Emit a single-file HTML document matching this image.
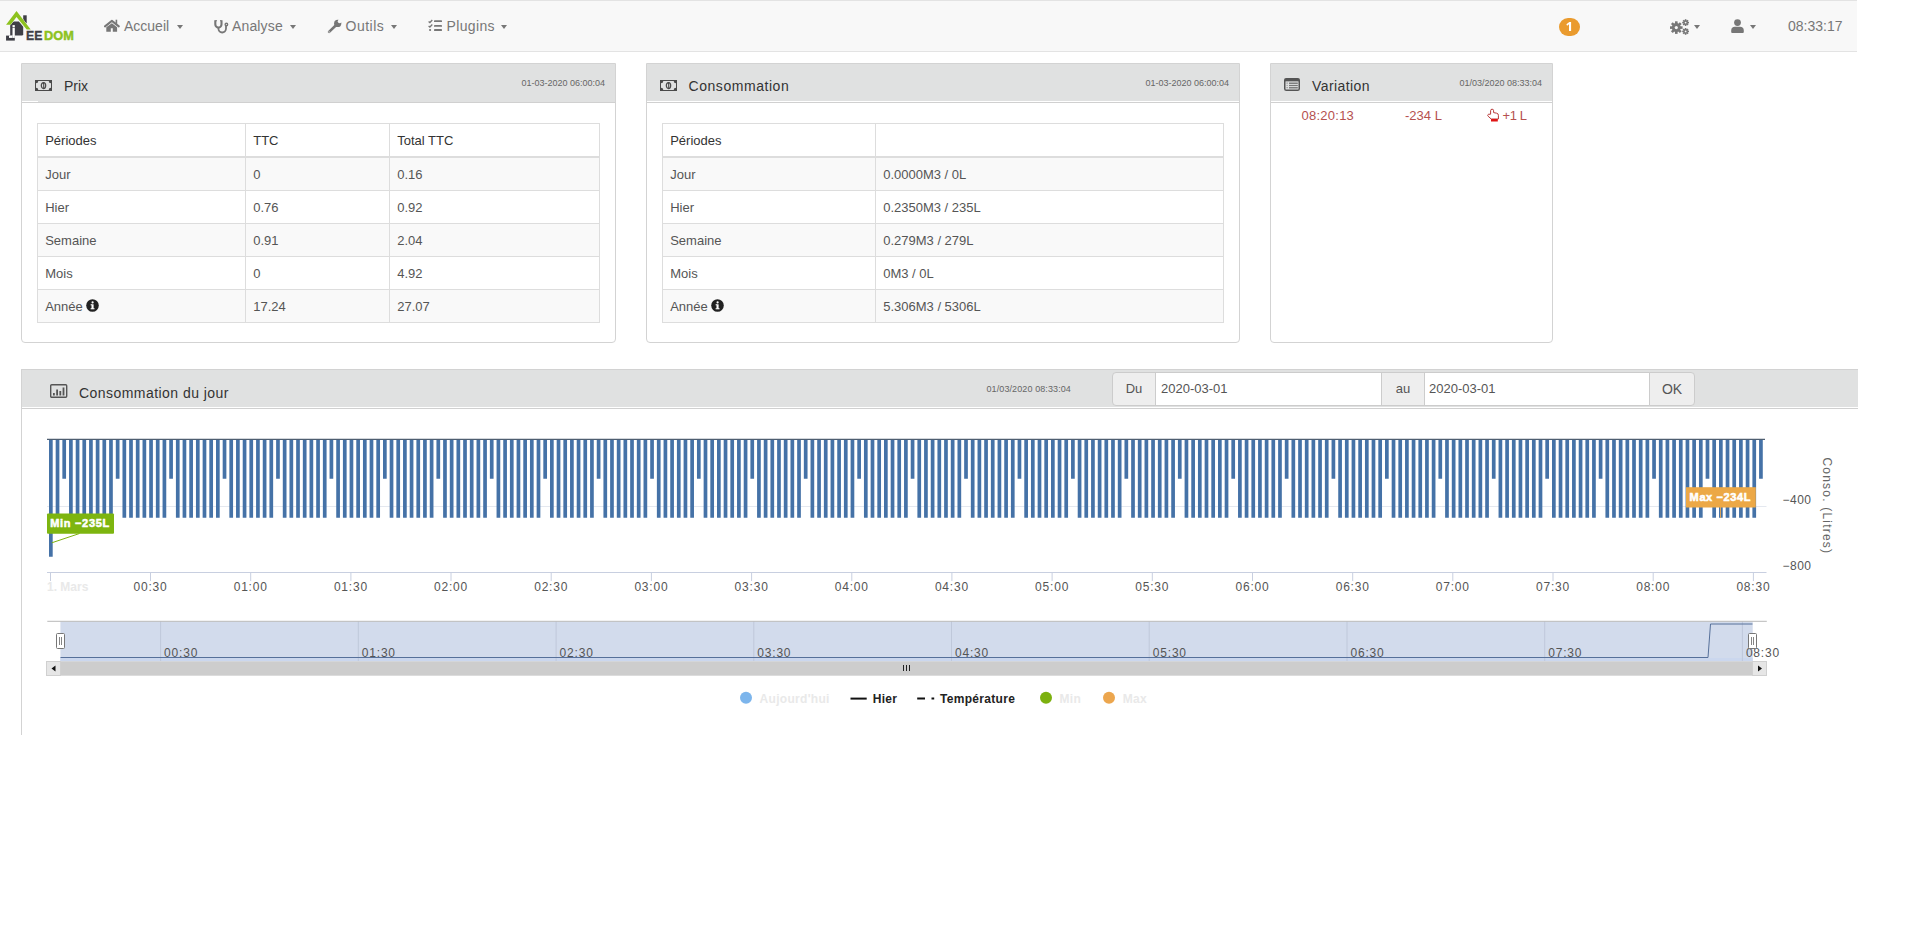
<!DOCTYPE html>
<html><head><meta charset="utf-8">
<style>
*{box-sizing:border-box}
html,body{margin:0;padding:0}
body{-webkit-font-smoothing:antialiased;width:1914px;height:935px;overflow:hidden;background:#fff;position:relative;font-family:"Liberation Sans",sans-serif;color:#555}
.abs{position:absolute}
#nav{position:absolute;left:0;top:0;width:1857px;height:52px;background:#f8f8f8;border-top:1px solid #e3e3e3;border-bottom:1px solid #e3e3e3}
.nt{position:absolute;top:16px;font-size:14px;line-height:18px;color:#777;white-space:nowrap}
.caret{position:absolute;width:0;height:0;border-left:3.6px solid transparent;border-right:3.6px solid transparent;border-top:4px solid #777}
.panel{position:absolute;border:1px solid #d3d3d3;border-radius:0 0 4px 4px;background:#fff}
.ph{position:absolute;left:0;top:0;right:0;height:39px;background:linear-gradient(#e0e1e1 0,#e0e1e1 37px,#fff 37px,#fff 38px,#d0d0d0 38px,#d0d0d0 39px)}
.pt{position:absolute;top:13px;font-size:14px;line-height:18px;color:#333;white-space:nowrap}
.pd{position:absolute;top:13px;font-size:9px;line-height:12px;color:#666;white-space:nowrap}
table.t{position:absolute;border-collapse:collapse;font-size:13px;color:#555}
table.t td{border:1px solid #ddd;padding:1.6px 0 0 7.2px;height:33px;line-height:18px;white-space:nowrap}
table.t tr.h td{color:#333;height:33px;border-bottom:2px solid #ddd}
table.t tr.s td{background:#f9f9f9}
table.t tr.f td{height:34px}
.var{position:absolute;top:108px;font-size:13px;line-height:16px;color:#b5514f;white-space:nowrap}
</style></head><body>

<div id="nav">
  <!-- logo -->
  <svg class="abs" style="left:0;top:-1px" width="80" height="50" viewBox="0 0 80 50">
    <path d="M10.2 35.6 V25 Q10.2 21.4 14 21.4 H18.9 L23.2 26.7 V34.2 Q23.2 35.6 21.8 35.6Z" fill="#3f3f46"/>
    <rect x="23.2" y="15.3" width="3.5" height="8" fill="#3f3f46"/>
    <rect x="6.06" y="35.6" width="8.74" height="5" fill="#3f3f46"/>
    <rect x="12.5" y="27.6" width="2.3" height="10.3" fill="#fff"/>
    <rect x="9" y="35.6" width="3.5" height="2.3" fill="#fff"/>
    <rect x="12.5" y="25.1" width="2.3" height="1.9" fill="#fff"/>
    <path d="M16.5 11.1 L30.7 29.5 H26.7 L16.5 17 L10.6 24.7 H6.06Z" fill="#8dc21f" stroke="#f8f8f8" stroke-width="0.9" paint-order="stroke"/>
    <text x="26.1" y="40.2" font-family="Liberation Sans" font-weight="700" font-size="13.7" fill="#3f3f46" stroke="#3f3f46" stroke-width="0.35" textLength="16.3" lengthAdjust="spacingAndGlyphs">EE</text>
    <text x="44" y="40.2" font-family="Liberation Sans" font-weight="700" font-size="13.7" fill="#8dc21f" stroke="#8dc21f" stroke-width="0.5" textLength="29.8" lengthAdjust="spacingAndGlyphs">DOM</text>
  </svg>
  <!-- Accueil -->
  <svg class="abs" style="left:104px;top:17px" width="16" height="14" viewBox="0 0 16 14">
    <path d="M1 8.4 L7.9 2.9 L14.8 8.4" fill="none" stroke="#777" stroke-width="2" stroke-linecap="round" stroke-linejoin="round"/>
    <rect x="11.6" y="1.7" width="1.6" height="4.2" fill="#777"/>
    <path d="M2.3 9.3 L7.9 5.2 L13.1 9.3 V13.7 H8.8 V10.2 H6.8 V13.7 H2.3Z" fill="#777"/>
  </svg>
  <span class="nt" style="left:124px">Accueil</span>
  <div class="caret" style="left:176.5px;top:24px"></div>
  <!-- Analyse -->
  <svg class="abs" style="left:213px;top:18px" width="16" height="15" viewBox="0 0 16 15">
    <path d="M2.3 1.2 V5.3 A3.1 3.3 0 0 0 8.5 5.3 V1.2" fill="none" stroke="#777" stroke-width="2.1"/>
    <path d="M2.3 1.7 H4 M8.5 1.7 H7" stroke="#777" stroke-width="1.1"/>
    <path d="M5.4 8.3 V9.6 A3.8 3.9 0 0 0 13 9.6 V6.6" fill="none" stroke="#777" stroke-width="1.8"/>
    <circle cx="13.4" cy="5.5" r="1.25" fill="none" stroke="#777" stroke-width="1.4"/>
  </svg>
  <span class="nt" style="left:232px;letter-spacing:0.15px">Analyse</span>
  <div class="caret" style="left:289.5px;top:24px"></div>
  <!-- Outils -->
  <svg class="abs" style="left:327px;top:17px" width="16" height="16" viewBox="0 0 16 16">
    <path d="M10 6.2 L2.1 13.9" stroke="#777" stroke-width="2.6" stroke-linecap="round"/>
    <circle cx="10.7" cy="5.4" r="3.6" fill="#777"/>
    <circle cx="12.7" cy="3.3" r="1.9" fill="#f8f8f8"/>
    <path d="M12.7 3.3 L15 1" stroke="#f8f8f8" stroke-width="2.2"/>
    <circle cx="2.1" cy="13.9" r="0.55" fill="#f8f8f8"/>
  </svg>
  <span class="nt" style="left:345.5px;letter-spacing:0.5px">Outils</span>
  <div class="caret" style="left:390.5px;top:24px"></div>
  <!-- Plugins -->
  <svg class="abs" style="left:428px;top:18.2px" width="15" height="13" viewBox="0 0 15 13">
    <rect x="6" y="1.3" width="8" height="1.8" rx="0.4" fill="#777"/>
    <rect x="6" y="6" width="8" height="1.8" rx="0.4" fill="#777"/>
    <rect x="6" y="10.1" width="8" height="1.8" rx="0.4" fill="#777"/>
    <path d="M0.6 2.4 L1.9 3.5 L4.3 1" fill="none" stroke="#777" stroke-width="1.3"/>
    <path d="M0.6 6.9 L1.9 8 L4.3 5.5" fill="none" stroke="#777" stroke-width="1.3"/>
    <circle cx="2.1" cy="11" r="1.1" fill="#777"/>
  </svg>
  <span class="nt" style="left:446.5px;letter-spacing:0.35px">Plugins</span>
  <div class="caret" style="left:501px;top:24px"></div>

  <!-- badge -->
  <svg class="abs" style="left:1559px;top:17px" width="21" height="18" viewBox="0 0 21 18">
    <rect x="0" y="0" width="21" height="18" rx="9" fill="#ea9b2e"/>
    <path d="M10 13 V6.3 L8.1 7.7 L7.4 6.2 L10.3 4.1 H12.1 V13Z" fill="#fff"/>
  </svg>
  <!-- gears -->
  <svg class="abs" style="left:1669.5px;top:17.5px" width="20" height="16" viewBox="0 0 20 16">
    <g fill="#777">
      <g transform="translate(6.3 8.6)">
        <circle r="4.5"/>
        <rect x="-1.3" y="-6.3" width="2.6" height="12.6"/>
        <rect x="-6.3" y="-1.3" width="12.6" height="2.6"/>
        <rect x="-1.3" y="-6.3" width="2.6" height="12.6" transform="rotate(45)"/>
        <rect x="-6.3" y="-1.3" width="12.6" height="2.6" transform="rotate(45)"/>
      </g>
      <g transform="translate(15.6 3.6)">
        <circle r="2.3"/>
        <rect x="-0.8" y="-3.4" width="1.6" height="6.8"/>
        <rect x="-3.4" y="-0.8" width="6.8" height="1.6"/>
        <rect x="-0.8" y="-3.4" width="1.6" height="6.8" transform="rotate(45)"/>
        <rect x="-3.4" y="-0.8" width="6.8" height="1.6" transform="rotate(45)"/>
      </g>
      <g transform="translate(15.6 12.4)">
        <circle r="2.3"/>
        <rect x="-0.8" y="-3.4" width="1.6" height="6.8"/>
        <rect x="-3.4" y="-0.8" width="6.8" height="1.6"/>
        <rect x="-0.8" y="-3.4" width="1.6" height="6.8" transform="rotate(45)"/>
        <rect x="-3.4" y="-0.8" width="6.8" height="1.6" transform="rotate(45)"/>
      </g>
    </g>
    <circle cx="6.3" cy="8.6" r="1.6" fill="#f8f8f8"/>
    <circle cx="15.6" cy="3.6" r="0.9" fill="#f8f8f8"/>
    <circle cx="15.6" cy="12.4" r="0.9" fill="#f8f8f8"/>
  </svg>
  <div class="caret" style="left:1693.5px;top:24px"></div>
  <!-- user -->
  <svg class="abs" style="left:1731px;top:18px" width="13" height="15" viewBox="0 0 13 15">
    <circle cx="6.5" cy="3.6" r="3.4" fill="#777"/>
    <path d="M0.2 13 V11.5 A3.8 3.8 0 0 1 4 7.8 H9 A3.8 3.8 0 0 1 12.8 11.5 V13 A1 1 0 0 1 11.8 14 H1.2 A1 1 0 0 1 0.2 13Z" fill="#777"/>
  </svg>
  <div class="caret" style="left:1749.5px;top:24px"></div>
  <span class="nt" style="left:1788px">08:33:17</span>
</div>

<!-- Panel Prix -->
<div class="panel" style="left:21px;top:63px;width:595px;height:280px">
  <div class="ph" style="background:linear-gradient(#e0e1e1 0,#e0e1e1 38px,#d0d0d0 38px,#d0d0d0 39px)"><div class="abs" style="left:0;top:37px;width:16px;height:1px;background:#fff"></div>
    <svg class="abs" style="left:13px;top:15.8px" width="17" height="11" viewBox="0 0 17 11">
      <path d="M0 0H17V11H0Z M3.3 1 H13.7 A2.3 2.3 0 0 0 16 3.3 V7.7 A2.3 2.3 0 0 0 13.7 10 H3.3 A2.3 2.3 0 0 0 1 7.7 V3.3 A2.3 2.3 0 0 0 3.3 1Z" fill="#4a4a4a" fill-rule="evenodd"/>
      <ellipse cx="8.5" cy="5.6" rx="2.2" ry="3" fill="none" stroke="#4a4a4a" stroke-width="1.2"/>
      <path d="M7.6 3.6 L8.7 3 V8.4" stroke="#4a4a4a" stroke-width="1.1" fill="none"/>
    </svg>
    <span class="pt" style="left:42px">Prix</span>
    <span class="pd" style="right:10px">01-03-2020 06:00:04</span>
  </div>
  <table class="t" style="left:15px;top:59px;width:563px">
    <tr class="h"><td style="width:208px">Périodes</td><td style="width:144px">TTC</td><td>Total TTC</td></tr>
    <tr class="s f"><td>Jour</td><td>0</td><td>0.16</td></tr>
    <tr><td>Hier</td><td>0.76</td><td>0.92</td></tr>
    <tr class="s"><td>Semaine</td><td>0.91</td><td>2.04</td></tr>
    <tr><td>Mois</td><td>0</td><td>4.92</td></tr>
    <tr class="s"><td>Année <svg width="13" height="13" viewBox="0 0 13 13" style="vertical-align:-1px;margin-left:0"><circle cx="6.5" cy="6.5" r="6.3" fill="#222"/><rect x="5.5" y="5.3" width="2.1" height="4.6" fill="#fff"/><rect x="4.6" y="9.2" width="3.9" height="1.1" fill="#fff"/><rect x="4.6" y="5.3" width="1.5" height="1" fill="#fff"/><circle cx="6.6" cy="3.4" r="1.1" fill="#fff"/></svg></td><td>17.24</td><td>27.07</td></tr>
  </table>
</div>

<!-- Panel Consommation -->
<div class="panel" style="left:646px;top:63px;width:594px;height:280px">
  <div class="ph">
    <svg class="abs" style="left:13px;top:15.8px" width="17" height="11" viewBox="0 0 17 11">
      <path d="M0 0H17V11H0Z M3.3 1 H13.7 A2.3 2.3 0 0 0 16 3.3 V7.7 A2.3 2.3 0 0 0 13.7 10 H3.3 A2.3 2.3 0 0 0 1 7.7 V3.3 A2.3 2.3 0 0 0 3.3 1Z" fill="#4a4a4a" fill-rule="evenodd"/>
      <ellipse cx="8.5" cy="5.6" rx="2.2" ry="3" fill="none" stroke="#4a4a4a" stroke-width="1.2"/>
      <path d="M7.6 3.6 L8.7 3 V8.4" stroke="#4a4a4a" stroke-width="1.1" fill="none"/>
    </svg>
    <span class="pt" style="left:41.5px;letter-spacing:0.55px">Consommation</span>
    <span class="pd" style="right:10px">01-03-2020 06:00:04</span>
  </div>
  <table class="t" style="left:15px;top:59px;width:562px">
    <tr class="h"><td style="width:213px">Périodes</td><td></td></tr>
    <tr class="s f"><td>Jour</td><td>0.0000M3 / 0L</td></tr>
    <tr><td>Hier</td><td>0.2350M3 / 235L</td></tr>
    <tr class="s"><td>Semaine</td><td>0.279M3 / 279L</td></tr>
    <tr><td>Mois</td><td>0M3 / 0L</td></tr>
    <tr class="s"><td>Année <svg width="13" height="13" viewBox="0 0 13 13" style="vertical-align:-1px;margin-left:0"><circle cx="6.5" cy="6.5" r="6.3" fill="#222"/><rect x="5.5" y="5.3" width="2.1" height="4.6" fill="#fff"/><rect x="4.6" y="9.2" width="3.9" height="1.1" fill="#fff"/><rect x="4.6" y="5.3" width="1.5" height="1" fill="#fff"/><circle cx="6.6" cy="3.4" r="1.1" fill="#fff"/></svg></td><td>5.306M3 / 5306L</td></tr>
  </table>
</div>

<!-- Panel Variation -->
<div class="panel" style="left:1270px;top:63px;width:283px;height:280px">
  <div class="ph">
    <svg class="abs" style="left:13.3px;top:14px" width="16" height="13" viewBox="0 0 16 13">
      <rect x="0.75" y="0.75" width="14.5" height="11.5" rx="1.6" fill="none" stroke="#555" stroke-width="1.5"/>
      <rect x="0.75" y="0.75" width="14.5" height="2.6" fill="#555"/>
      <rect x="5" y="4.6" width="8.8" height="1.2" fill="#666"/>
      <rect x="5" y="6.9" width="8.8" height="1.2" fill="#777"/>
      <rect x="5" y="9.2" width="8.8" height="1.2" fill="#666"/>
      <rect x="2.6" y="4.6" width="1" height="1" fill="#666"/>
      <rect x="2.6" y="6.9" width="1" height="1" fill="#888"/>
      <rect x="2.6" y="9.2" width="1" height="1" fill="#666"/>
    </svg>
    <span class="pt" style="left:41px;letter-spacing:0.4px">Variation</span>
    <span class="pd" style="right:10px">01/03/2020 08:33:04</span>
  </div>
</div>
<span class="var" style="left:1301.5px;letter-spacing:0.25px">08:20:13</span>
<span class="var" style="left:1405px">-234 L</span>
<svg class="abs" style="left:1487px;top:108px" width="13" height="14" viewBox="0 0 13 14">
  <path d="M3.6 6.2 V2.7 A1.5 1.5 0 0 1 6.6 2.7 V4.6 L9.6 5.2 A2.1 2.1 0 0 1 11.4 7.3 V11 H4.2 L1.1 8.2 A1.1 1.1 0 0 1 1.5 6.3 Z" fill="#fff" stroke="#b83a3a" stroke-width="1"/>
  <rect x="4" y="11" width="6.8" height="2.5" fill="#e01515"/>
</svg>
<span class="var" style="left:1502.5px;letter-spacing:-0.4px">+1 L</span>

<!-- Lower panel -->
<div class="abs" style="left:21px;top:369px;width:1836px;height:366px;border-left:1px solid #d3d3d3">
  <div class="abs" style="left:0;top:0;width:1836px;height:38px;background:#e0e1e1;border-top:1px solid #d2d2d2"></div>
  <div class="abs" style="left:0;top:39px;width:1836px;height:1px;background:#d0d0d0"></div>
  <svg class="abs" style="left:28px;top:15px" width="18" height="14" viewBox="0 0 18 14">
    <rect x="0.7" y="0.7" width="16" height="12.6" rx="1" fill="none" stroke="#555" stroke-width="1.4"/>
    <rect x="3" y="9" width="1.8" height="2.5" fill="#555"/>
    <rect x="6.2" y="5.5" width="1.8" height="6" fill="#555"/>
    <rect x="9.4" y="7" width="1.8" height="4.5" fill="#555"/>
    <rect x="12.6" y="3.5" width="1.8" height="8" fill="#555"/>
  </svg>
  <span class="pt" style="left:57px;top:14.5px;letter-spacing:0.45px">Consommation du jour</span>
  <span class="pd" style="left:964.5px;top:14px;letter-spacing:0.1px">01/03/2020 08:33:04</span>
</div>
<!-- input group -->
<div class="abs" style="left:1112px;top:372px;width:44px;height:34px;background:#eee;border:1px solid #ccc;border-radius:4px 0 0 4px;font-size:13px;line-height:32px;text-align:center;color:#555">Du</div>
<div class="abs" style="left:1155px;top:372px;width:227px;height:34px;background:#fff;border:1px solid #ccc;font-size:13px;line-height:32px;padding-left:5px;color:#555">2020-03-01</div>
<div class="abs" style="left:1381px;top:372px;width:44px;height:34px;background:#eee;border:1px solid #ccc;font-size:13px;line-height:32px;text-align:center;color:#555">au</div>
<div class="abs" style="left:1424px;top:372px;width:226px;height:34px;background:#fff;border:1px solid #ccc;font-size:13px;line-height:32px;padding-left:4px;color:#555">2020-03-01</div>
<div class="abs" style="left:1649px;top:372px;width:46px;height:34px;background:#eee;border:1px solid #ccc;border-radius:0 4px 4px 0;font-size:14px;line-height:32px;text-align:center;color:#555">OK</div>

<!-- Chart -->
<svg class="abs" style="left:0;top:0" width="1914" height="935" viewBox="0 0 1914 935" font-family="Liberation Sans">
  <!-- grid line -400 -->
  <path d="M47 506.5H1766.5" stroke="#e4e8ef" stroke-width="1"/>
  <!-- bars -->
  <path d="M49.00 440.0h3.7V556.7h-3.7zM55.68 440.0h3.7V517.8h-3.7zM62.36 440.0h3.7V478.7h-3.7zM69.04 440.0h3.7V517.8h-3.7zM75.72 440.0h3.7V517.8h-3.7zM82.40 440.0h3.7V517.8h-3.7zM89.08 440.0h3.7V517.8h-3.7zM95.76 440.0h3.7V517.8h-3.7zM102.44 440.0h3.7V517.8h-3.7zM109.12 440.0h3.7V517.8h-3.7zM115.80 440.0h3.7V478.7h-3.7zM122.48 440.0h3.7V517.8h-3.7zM129.16 440.0h3.7V517.8h-3.7zM135.84 440.0h3.7V517.8h-3.7zM142.52 440.0h3.7V517.8h-3.7zM149.20 440.0h3.7V517.8h-3.7zM155.88 440.0h3.7V517.8h-3.7zM162.56 440.0h3.7V517.8h-3.7zM169.24 440.0h3.7V478.7h-3.7zM175.92 440.0h3.7V517.8h-3.7zM182.60 440.0h3.7V517.8h-3.7zM189.28 440.0h3.7V517.8h-3.7zM195.96 440.0h3.7V517.8h-3.7zM202.64 440.0h3.7V517.8h-3.7zM209.32 440.0h3.7V517.8h-3.7zM216.00 440.0h3.7V517.8h-3.7zM222.68 440.0h3.7V478.7h-3.7zM229.36 440.0h3.7V517.8h-3.7zM236.04 440.0h3.7V517.8h-3.7zM242.72 440.0h3.7V517.8h-3.7zM249.40 440.0h3.7V517.8h-3.7zM256.08 440.0h3.7V517.8h-3.7zM262.76 440.0h3.7V517.8h-3.7zM269.44 440.0h3.7V517.8h-3.7zM276.12 440.0h3.7V478.7h-3.7zM282.80 440.0h3.7V517.8h-3.7zM289.48 440.0h3.7V517.8h-3.7zM296.16 440.0h3.7V517.8h-3.7zM302.84 440.0h3.7V517.8h-3.7zM309.52 440.0h3.7V517.8h-3.7zM316.20 440.0h3.7V517.8h-3.7zM322.88 440.0h3.7V517.8h-3.7zM329.56 440.0h3.7V478.7h-3.7zM336.24 440.0h3.7V517.8h-3.7zM342.92 440.0h3.7V517.8h-3.7zM349.60 440.0h3.7V517.8h-3.7zM356.28 440.0h3.7V517.8h-3.7zM362.96 440.0h3.7V517.8h-3.7zM369.64 440.0h3.7V517.8h-3.7zM376.32 440.0h3.7V517.8h-3.7zM383.00 440.0h3.7V478.7h-3.7zM389.68 440.0h3.7V517.8h-3.7zM396.36 440.0h3.7V517.8h-3.7zM403.04 440.0h3.7V517.8h-3.7zM409.72 440.0h3.7V517.8h-3.7zM416.40 440.0h3.7V517.8h-3.7zM423.08 440.0h3.7V517.8h-3.7zM429.76 440.0h3.7V517.8h-3.7zM436.44 440.0h3.7V478.7h-3.7zM443.12 440.0h3.7V517.8h-3.7zM449.80 440.0h3.7V517.8h-3.7zM456.48 440.0h3.7V517.8h-3.7zM463.16 440.0h3.7V517.8h-3.7zM469.84 440.0h3.7V517.8h-3.7zM476.52 440.0h3.7V517.8h-3.7zM483.20 440.0h3.7V517.8h-3.7zM489.88 440.0h3.7V478.7h-3.7zM496.56 440.0h3.7V517.8h-3.7zM503.24 440.0h3.7V517.8h-3.7zM509.92 440.0h3.7V517.8h-3.7zM516.60 440.0h3.7V517.8h-3.7zM523.28 440.0h3.7V517.8h-3.7zM529.96 440.0h3.7V517.8h-3.7zM536.64 440.0h3.7V517.8h-3.7zM543.32 440.0h3.7V478.7h-3.7zM550.00 440.0h3.7V517.8h-3.7zM556.68 440.0h3.7V517.8h-3.7zM563.36 440.0h3.7V517.8h-3.7zM570.04 440.0h3.7V517.8h-3.7zM576.72 440.0h3.7V517.8h-3.7zM583.40 440.0h3.7V517.8h-3.7zM590.08 440.0h3.7V517.8h-3.7zM596.76 440.0h3.7V478.7h-3.7zM603.44 440.0h3.7V517.8h-3.7zM610.12 440.0h3.7V517.8h-3.7zM616.80 440.0h3.7V517.8h-3.7zM623.48 440.0h3.7V517.8h-3.7zM630.16 440.0h3.7V517.8h-3.7zM636.84 440.0h3.7V517.8h-3.7zM643.52 440.0h3.7V517.8h-3.7zM650.20 440.0h3.7V478.7h-3.7zM656.88 440.0h3.7V517.8h-3.7zM663.56 440.0h3.7V517.8h-3.7zM670.24 440.0h3.7V517.8h-3.7zM676.92 440.0h3.7V517.8h-3.7zM683.60 440.0h3.7V517.8h-3.7zM690.28 440.0h3.7V517.8h-3.7zM696.96 440.0h3.7V478.7h-3.7zM703.64 440.0h3.7V517.8h-3.7zM710.32 440.0h3.7V517.8h-3.7zM717.00 440.0h3.7V517.8h-3.7zM723.68 440.0h3.7V517.8h-3.7zM730.36 440.0h3.7V517.8h-3.7zM737.04 440.0h3.7V517.8h-3.7zM743.72 440.0h3.7V517.8h-3.7zM750.40 440.0h3.7V478.7h-3.7zM757.08 440.0h3.7V517.8h-3.7zM763.76 440.0h3.7V517.8h-3.7zM770.44 440.0h3.7V517.8h-3.7zM777.12 440.0h3.7V517.8h-3.7zM783.80 440.0h3.7V517.8h-3.7zM790.48 440.0h3.7V517.8h-3.7zM797.16 440.0h3.7V517.8h-3.7zM803.84 440.0h3.7V478.7h-3.7zM810.52 440.0h3.7V517.8h-3.7zM817.20 440.0h3.7V517.8h-3.7zM823.88 440.0h3.7V517.8h-3.7zM830.56 440.0h3.7V517.8h-3.7zM837.24 440.0h3.7V517.8h-3.7zM843.92 440.0h3.7V517.8h-3.7zM850.60 440.0h3.7V517.8h-3.7zM857.28 440.0h3.7V478.7h-3.7zM863.96 440.0h3.7V517.8h-3.7zM870.64 440.0h3.7V517.8h-3.7zM877.32 440.0h3.7V517.8h-3.7zM884.00 440.0h3.7V517.8h-3.7zM890.68 440.0h3.7V517.8h-3.7zM897.36 440.0h3.7V517.8h-3.7zM904.04 440.0h3.7V517.8h-3.7zM910.72 440.0h3.7V478.7h-3.7zM917.40 440.0h3.7V517.8h-3.7zM924.08 440.0h3.7V517.8h-3.7zM930.76 440.0h3.7V517.8h-3.7zM937.44 440.0h3.7V517.8h-3.7zM944.12 440.0h3.7V517.8h-3.7zM950.80 440.0h3.7V517.8h-3.7zM957.48 440.0h3.7V517.8h-3.7zM964.16 440.0h3.7V478.7h-3.7zM970.84 440.0h3.7V517.8h-3.7zM977.52 440.0h3.7V517.8h-3.7zM984.20 440.0h3.7V517.8h-3.7zM990.88 440.0h3.7V517.8h-3.7zM997.56 440.0h3.7V517.8h-3.7zM1004.24 440.0h3.7V517.8h-3.7zM1010.92 440.0h3.7V517.8h-3.7zM1017.60 440.0h3.7V478.7h-3.7zM1024.28 440.0h3.7V517.8h-3.7zM1030.96 440.0h3.7V517.8h-3.7zM1037.64 440.0h3.7V517.8h-3.7zM1044.32 440.0h3.7V517.8h-3.7zM1051.00 440.0h3.7V517.8h-3.7zM1057.68 440.0h3.7V517.8h-3.7zM1064.36 440.0h3.7V517.8h-3.7zM1071.04 440.0h3.7V478.7h-3.7zM1077.72 440.0h3.7V517.8h-3.7zM1084.40 440.0h3.7V517.8h-3.7zM1091.08 440.0h3.7V517.8h-3.7zM1097.76 440.0h3.7V517.8h-3.7zM1104.44 440.0h3.7V517.8h-3.7zM1111.12 440.0h3.7V517.8h-3.7zM1117.80 440.0h3.7V517.8h-3.7zM1124.48 440.0h3.7V478.7h-3.7zM1131.16 440.0h3.7V517.8h-3.7zM1137.84 440.0h3.7V517.8h-3.7zM1144.52 440.0h3.7V517.8h-3.7zM1151.20 440.0h3.7V517.8h-3.7zM1157.88 440.0h3.7V517.8h-3.7zM1164.56 440.0h3.7V517.8h-3.7zM1171.24 440.0h3.7V517.8h-3.7zM1177.92 440.0h3.7V478.7h-3.7zM1184.60 440.0h3.7V517.8h-3.7zM1191.28 440.0h3.7V517.8h-3.7zM1197.96 440.0h3.7V517.8h-3.7zM1204.64 440.0h3.7V517.8h-3.7zM1211.32 440.0h3.7V517.8h-3.7zM1218.00 440.0h3.7V517.8h-3.7zM1224.68 440.0h3.7V517.8h-3.7zM1231.36 440.0h3.7V478.7h-3.7zM1238.04 440.0h3.7V517.8h-3.7zM1244.72 440.0h3.7V517.8h-3.7zM1251.40 440.0h3.7V517.8h-3.7zM1258.08 440.0h3.7V517.8h-3.7zM1264.76 440.0h3.7V517.8h-3.7zM1271.44 440.0h3.7V517.8h-3.7zM1278.12 440.0h3.7V517.8h-3.7zM1284.80 440.0h3.7V478.7h-3.7zM1291.48 440.0h3.7V517.8h-3.7zM1298.16 440.0h3.7V517.8h-3.7zM1304.84 440.0h3.7V517.8h-3.7zM1311.52 440.0h3.7V517.8h-3.7zM1318.20 440.0h3.7V517.8h-3.7zM1324.88 440.0h3.7V517.8h-3.7zM1331.56 440.0h3.7V478.7h-3.7zM1338.24 440.0h3.7V517.8h-3.7zM1344.92 440.0h3.7V517.8h-3.7zM1351.60 440.0h3.7V517.8h-3.7zM1358.28 440.0h3.7V517.8h-3.7zM1364.96 440.0h3.7V517.8h-3.7zM1371.64 440.0h3.7V517.8h-3.7zM1378.32 440.0h3.7V517.8h-3.7zM1385.00 440.0h3.7V478.7h-3.7zM1391.68 440.0h3.7V517.8h-3.7zM1398.36 440.0h3.7V517.8h-3.7zM1405.04 440.0h3.7V517.8h-3.7zM1411.72 440.0h3.7V517.8h-3.7zM1418.40 440.0h3.7V517.8h-3.7zM1425.08 440.0h3.7V517.8h-3.7zM1431.76 440.0h3.7V517.8h-3.7zM1438.44 440.0h3.7V478.7h-3.7zM1445.12 440.0h3.7V517.8h-3.7zM1451.80 440.0h3.7V517.8h-3.7zM1458.48 440.0h3.7V517.8h-3.7zM1465.16 440.0h3.7V517.8h-3.7zM1471.84 440.0h3.7V517.8h-3.7zM1478.52 440.0h3.7V517.8h-3.7zM1485.20 440.0h3.7V517.8h-3.7zM1491.88 440.0h3.7V478.7h-3.7zM1498.56 440.0h3.7V517.8h-3.7zM1505.24 440.0h3.7V517.8h-3.7zM1511.92 440.0h3.7V517.8h-3.7zM1518.60 440.0h3.7V517.8h-3.7zM1525.28 440.0h3.7V517.8h-3.7zM1531.96 440.0h3.7V517.8h-3.7zM1538.64 440.0h3.7V517.8h-3.7zM1545.32 440.0h3.7V478.7h-3.7zM1552.00 440.0h3.7V517.8h-3.7zM1558.68 440.0h3.7V517.8h-3.7zM1565.36 440.0h3.7V517.8h-3.7zM1572.04 440.0h3.7V517.8h-3.7zM1578.72 440.0h3.7V517.8h-3.7zM1585.40 440.0h3.7V517.8h-3.7zM1592.08 440.0h3.7V517.8h-3.7zM1598.76 440.0h3.7V478.7h-3.7zM1605.44 440.0h3.7V517.8h-3.7zM1612.12 440.0h3.7V517.8h-3.7zM1618.80 440.0h3.7V517.8h-3.7zM1625.48 440.0h3.7V517.8h-3.7zM1632.16 440.0h3.7V517.8h-3.7zM1638.84 440.0h3.7V517.8h-3.7zM1645.52 440.0h3.7V517.8h-3.7zM1652.20 440.0h3.7V478.7h-3.7zM1658.88 440.0h3.7V517.8h-3.7zM1665.56 440.0h3.7V517.8h-3.7zM1672.24 440.0h3.7V517.8h-3.7zM1678.92 440.0h3.7V517.8h-3.7zM1685.60 440.0h3.7V517.8h-3.7zM1692.28 440.0h3.7V517.8h-3.7zM1698.96 440.0h3.7V517.8h-3.7zM1705.64 440.0h3.7V478.7h-3.7zM1712.32 440.0h3.7V517.8h-3.7zM1719.00 440.0h3.7V517.8h-3.7zM1725.68 440.0h3.7V517.8h-3.7zM1732.36 440.0h3.7V517.8h-3.7zM1739.04 440.0h3.7V517.8h-3.7zM1745.72 440.0h3.7V517.8h-3.7zM1752.40 440.0h3.7V517.8h-3.7zM1759.08 440.0h3.7V478.7h-3.7z" fill="#4572a7"/>
  <!-- top line -->
  <path d="M47 439.4H1765" stroke="#4e5e70" stroke-width="1.1"/>
  <!-- max connector -->
  <path d="M1720.5 507V518" stroke="#d9a35a" stroke-width="1"/>
  <!-- x axis -->
  <path d="M47 572.5H1766.5" stroke="#c8cfe0" stroke-width="1"/>
  <path d="M150.5 572.5V581M250.7 572.5V581M350.9 572.5V581M451.0 572.5V581M551.2 572.5V581M651.4 572.5V581M751.6 572.5V581M851.8 572.5V581M951.9 572.5V581M1052.1 572.5V581M1152.3 572.5V581M1252.5 572.5V581M1352.7 572.5V581M1452.8 572.5V581M1553.0 572.5V581M1653.2 572.5V581M1753.4 572.5V581 M50.5 572.5V581" stroke="#c8cfe0" stroke-width="1"/>
  <g font-size="12" fill="#555" letter-spacing="0.8"><text x="150.5" y="591" text-anchor="middle">00:30</text><text x="250.7" y="591" text-anchor="middle">01:00</text><text x="350.9" y="591" text-anchor="middle">01:30</text><text x="451.0" y="591" text-anchor="middle">02:00</text><text x="551.2" y="591" text-anchor="middle">02:30</text><text x="651.4" y="591" text-anchor="middle">03:00</text><text x="751.6" y="591" text-anchor="middle">03:30</text><text x="851.8" y="591" text-anchor="middle">04:00</text><text x="951.9" y="591" text-anchor="middle">04:30</text><text x="1052.1" y="591" text-anchor="middle">05:00</text><text x="1152.3" y="591" text-anchor="middle">05:30</text><text x="1252.5" y="591" text-anchor="middle">06:00</text><text x="1352.7" y="591" text-anchor="middle">06:30</text><text x="1452.8" y="591" text-anchor="middle">07:00</text><text x="1553.0" y="591" text-anchor="middle">07:30</text><text x="1653.2" y="591" text-anchor="middle">08:00</text><text x="1753.4" y="591" text-anchor="middle">08:30</text></g>
  <text x="47" y="591" font-size="12" font-weight="700" fill="#e9e9e9" letter-spacing="0">1. Mars</text>
  <!-- y axis labels -->
  <g font-size="12" fill="#555" letter-spacing="0.5">
    <text x="1782.5" y="503.5">−400</text>
    <text x="1782.5" y="569.5">−800</text>
  </g>
  <text transform="translate(1823 457.5) rotate(90)" font-size="12" fill="#666" letter-spacing="1.2">Conso. (Litres)</text>
  <!-- min label -->
  <path d="M79.5 533.5 L51.8 542.8" stroke="#7db20f" stroke-width="1"/>
  <rect x="47" y="513.5" width="67" height="20.3" rx="1" fill="#7db50f"/>
  <text x="50.2" y="527" font-size="11" font-weight="700" fill="#fff" stroke="#fff" stroke-width="0.55" letter-spacing="0.7">Min −235L</text>
  <!-- max label -->
  <rect x="1686" y="487.2" width="69.8" height="20.3" fill="#eca846"/>
  <text x="1689.6" y="501" font-size="11" font-weight="700" fill="#fff" stroke="#fff" stroke-width="0.55" letter-spacing="0.62">Max −234L</text>

  <!-- navigator -->
  <rect x="60.4" y="621.5" width="1692.3" height="39.8" fill="#d2dbec"/>
  <rect x="60.4" y="658" width="1692.3" height="3.3" fill="#cbd7ee"/>
  <path d="M160.6 621.5V661M358.3 621.5V661M556.1 621.5V661M753.8 621.5V661M951.5 621.5V661M1149.2 621.5V661M1347.0 621.5V661M1544.7 621.5V661M1742.4 621.5V661" stroke="#bfc8da" stroke-width="1"/>
  <path d="M47.3 621.3H1766.8" stroke="#b8b8b8" stroke-width="1"/>
    <path d="M60.5 657.5H1708 L1710.5 624H1752.5" fill="none" stroke="#56709a" stroke-width="1"/>
  <g font-size="12" fill="#555" letter-spacing="0.8"><text x="164.1" y="657">00:30</text><text x="361.8" y="657">01:30</text><text x="559.6" y="657">02:30</text><text x="757.3" y="657">03:30</text><text x="955.0" y="657">04:30</text><text x="1152.8" y="657">05:30</text><text x="1350.5" y="657">06:30</text><text x="1548.2" y="657">07:30</text><text x="1745.9" y="657">08:30</text></g>
  <!-- handles -->
  <rect x="56.5" y="633.5" width="8" height="15" fill="#fff" stroke="#777" stroke-width="1" rx="1"/>
  <path d="M59.5 637V645M61.5 637V645" stroke="#666" stroke-width="0.8"/>
  <rect x="1748.5" y="633.5" width="8" height="15" fill="#fff" stroke="#777" stroke-width="1" rx="1"/>
  <path d="M1751.5 637V645M1753.5 637V645" stroke="#666" stroke-width="0.8"/>
  <!-- scrollbar -->
  <rect x="60" y="661.3" width="1692.7" height="14.4" fill="#cdcdcd"/>
  <rect x="46.5" y="661.5" width="14" height="14" fill="#e6e6e6" stroke="#d0d0d0" stroke-width="1"/>
  <path d="M51.5 668.5 L55.5 665.5 V671.5Z" fill="#111"/>
  <rect x="1752.5" y="661.5" width="14" height="14" fill="#e6e6e6" stroke="#d0d0d0" stroke-width="1"/>
  <path d="M1762 668.5 L1758 665.5 V671.5Z" fill="#111"/>
  <path d="M903.5 665V671M906.5 665V671M909.5 665V671" stroke="#222" stroke-width="1"/>

  <!-- legend -->
  <circle cx="746" cy="697.8" r="6" fill="#7cb5ec"/>
  <g font-size="12" font-weight="700" letter-spacing="0.3">
    <text x="759.6" y="702.8" fill="#e9e9e9">Aujourd'hui</text>
    <text x="872.7" y="702.8" fill="#222">Hier</text>
    <text x="940" y="702.8" fill="#222">Température</text>
    <text x="1059.5" y="702.8" fill="#e9e9e9">Min</text>
    <text x="1122.8" y="702.8" fill="#e9e9e9">Max</text>
  </g>
  <path d="M850.5 698.6H866.7" stroke="#111" stroke-width="2"/>
  <path d="M917.2 698.6H925M931.5 698.6H934.2" stroke="#111" stroke-width="2"/>
  <circle cx="1046" cy="697.8" r="6" fill="#7cb10f"/>
  <circle cx="1109" cy="697.8" r="6" fill="#eca64e"/>
</svg>

</body></html>
